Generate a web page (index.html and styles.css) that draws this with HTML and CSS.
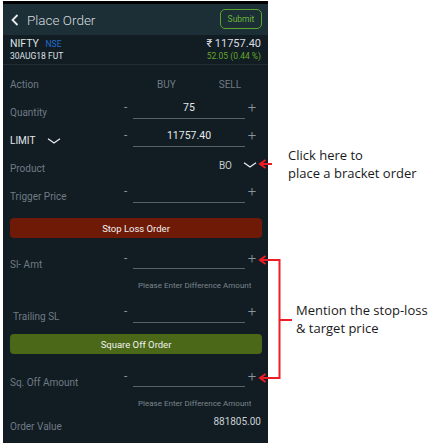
FILE: index.html
```html
<!DOCTYPE html>
<html lang="en">
<head>
    <meta charset="UTF-8">
    <meta name="viewport" content="width=device-width, initial-scale=1.0">
    <title>Place Order</title>
    <link rel="stylesheet" href="styles.css">
</head>
<body>
    <div class="page">
        <div class="phone">
            <header class="topbar">
                <div class="title">
                    <svg class="back" viewBox="0 0 8 12" width="8" height="12">
                        <polyline points="6.5,1 1.5,6 6.5,11" fill="none" stroke="#e8ecee" stroke-width="1.8"/>
                    </svg>
                    <span>Place Order</span>
                </div>
                <button class="submit">Submit</button>
            </header>

            <div class="scrip">
                <div class="scrip-line">
                    <span class="name">NIFTY <em>NSE</em></span>
                    <span class="ltp">₹ 11757.40</span>
                </div>
                <div class="scrip-line small">
                    <span>30AUG18 FUT</span>
                    <span class="change">52.05 (0.44 %)</span>
                </div>
            </div>

            <div class="row action">
                <span class="label">Action</span>
                <div class="sides">
                    <span>BUY</span>
                    <span>SELL</span>
                </div>
            </div>

            <div class="row">
                <span class="label">Quantity</span>
                <div class="stepper">
                    <span class="minus">-</span>
                    <span class="input">75</span>
                    <span class="plus">+</span>
                </div>
            </div>

            <div class="row">
                <span class="label white">LIMIT
                    <svg class="chev" viewBox="0 0 14 6" width="14" height="6">
                        <polyline points="1,0.8 7,5 13,0.8" fill="none" stroke="#e8ecee" stroke-width="1.3"/>
                    </svg>
                </span>
                <div class="stepper">
                    <span class="minus">-</span>
                    <span class="input">11757.40</span>
                    <span class="plus">+</span>
                </div>
            </div>

            <div class="row">
                <span class="label">Product</span>
                <div class="product">
                    <span>BO</span>
                    <svg class="chev" viewBox="0 0 14 6" width="14" height="6">
                        <polyline points="1,0.8 7,5 13,0.8" fill="none" stroke="#e8ecee" stroke-width="1.3"/>
                    </svg>
                </div>
            </div>

            <div class="row">
                <span class="label">Trigger Price</span>
                <div class="stepper">
                    <span class="minus">-</span>
                    <span class="input"></span>
                    <span class="plus">+</span>
                </div>
            </div>

            <button class="band stoploss">Stop Loss Order</button>

            <div class="row sl-amt">
                <span class="label">Sl- Amt</span>
                <div class="stepper">
                    <span class="minus">-</span>
                    <span class="input"></span>
                    <span class="plus">+</span>
                </div>
            </div>
            <p class="hint">Please Enter Difference Amount</p>

            <div class="row trailing">
                <span class="label indent">Trailing SL</span>
                <div class="stepper">
                    <span class="minus">-</span>
                    <span class="input"></span>
                    <span class="plus">+</span>
                </div>
            </div>

            <button class="band squareoff">Square Off Order</button>

            <div class="row sq-amt">
                <span class="label">Sq. Off Amount</span>
                <div class="stepper">
                    <span class="minus">-</span>
                    <span class="input"></span>
                    <span class="plus">+</span>
                </div>
            </div>
            <p class="hint">Please Enter Difference Amount</p>

            <div class="row total">
                <span class="label">Order Value</span>
                <span class="amount">881805.00</span>
            </div>
        </div>

        <div class="notes">
            <p class="note bracket">Click here to<br>place a bracket order</p>
            <p class="note targets">Mention the stop-loss<br>&amp; target price</p>
        </div>

        <!-- red callout arrows drawn over the screenshot edge -->
        <svg class="callouts" viewBox="0 0 428 447" width="428" height="447">
            <g fill="none" stroke="#ee1c24" stroke-width="2">
                <line x1="260" y1="164" x2="272" y2="164"/>
                <polyline points="265.5,160 260,164 265.5,168"/>
                <polyline points="260,260 279.5,260 279.5,378 260,378"/>
                <polyline points="265.5,256 260,260 265.5,264"/>
                <polyline points="265.5,374 260,378 265.5,382"/>
                <line x1="279.5" y1="320" x2="292" y2="320"/>
            </g>
        </svg>
    </div>
</body>
</html>
```

FILE: styles.css
```css
:root {
    --header-bg: #1c2e36;
    --body-bg: #121c23;
    --line: #222e36;
    --label: #6f7b83;
    --value: #e4e8ea;
    --muted: #8a949a;
    --underline: #56626a;
}

* {
    margin: 0;
    padding: 0;
    box-sizing: border-box;
}

body {
    background: #ffffff;
    font-family: Roboto, 'Liberation Sans', Arial, sans-serif;
}

.page {
    position: relative;
    display: flex;
    width: 428px;
    height: 447px;
    padding: 1px 0 0 3px;
}

.phone {
    width: 265px;
    height: 442px;
    background-color: var(--body-bg);
    border-top: 3px solid #000000;
    color: var(--label);
    font-size: 10px;
}

.topbar {
    height: 31px;
    display: flex;
    align-items: center;
    justify-content: space-between;
    padding: 0 6px 0 8px;
    background-color: var(--header-bg);
}

.title {
    display: flex;
    align-items: center;
    gap: 8px;
    color: #d6dcdf;
    font-size: 13.5px;
    font-weight: 300;
}

.submit {
    width: 42px;
    height: 20px;
    border: 1px solid #5aa52a;
    border-radius: 5px;
    background: transparent;
    color: #6bb536;
    font-family: inherit;
    font-size: 8.5px;
    margin-top: -1px;
}

.scrip {
    height: 30px;
    padding: 3px 7px 0 7px;
    border-bottom: 1px solid var(--line);
}

.scrip-line {
    display: flex;
    justify-content: space-between;
    align-items: baseline;
    color: #dfe3e5;
    font-size: 10.5px;
    line-height: 12px;
}

.scrip-line.small {
    font-size: 8.5px;
    line-height: 12px;
}

.name em {
    font-style: normal;
    color: #1f6fd1;
    font-size: 8.5px;
    margin-left: 4px;
}

.ltp {
    font-size: 11px;
    color: #d8dde0;
}

.change {
    color: #62a82c;
}

.row {
    height: 28px;
    display: grid;
    grid-template-columns: 115px 1fr;
    padding-right: 9px;
}

.row .label {
    padding-left: 7px;
    align-self: center;
    margin-top: 1px;
    display: flex;
    align-items: center;
    gap: 12px;
}

.label.white {
    color: var(--value);
}

.label.indent {
    padding-left: 10px;
}

.row.action {
    height: 28px;
    margin-top: 5px;
}

.sides {
    display: flex;
    align-items: center;
    padding-left: 39px;
    gap: 43px;
    margin-top: 1px;
}

.stepper {
    display: flex;
    height: 21px;
    color: var(--muted);
}

.minus {
    width: 15px;
    padding-left: 6px;
    font-size: 12px;
    line-height: 19px;
}

.input {
    width: 112px;
    border-bottom: 1px solid var(--underline);
    text-align: center;
    color: var(--value);
    font-size: 10.5px;
    line-height: 19px;
}

.plus {
    width: 14px;
    text-align: center;
    font-size: 15px;
    line-height: 19px;
    font-weight: 300;
}

.product {
    display: flex;
    align-items: center;
    justify-content: flex-end;
    gap: 11px;
    padding-right: 2px;
    margin-top: -6px;
    color: #c4cacd;
    font-size: 10px;
}

.band {
    display: block;
    width: 252px;
    height: 20px;
    margin: 8px 0 0 7px;
    border: none;
    border-radius: 4px;
    color: #f2f2f2;
    font-family: inherit;
    font-size: 9.5px;
    font-weight: 400;
}

.stoploss {
    background-color: #6f1a07;
}

.squareoff {
    background-color: #4a6817;
    margin-top: 4px;
}

.row.sl-amt {
    margin-top: 12px;
}

.row.sq-amt {
    margin-top: 14px;
}

.row.sl-amt .stepper,
.row.sq-amt .stepper {
    height: 20px;
    margin-top: -1px;
}

.hint {
    height: 14px;
    padding-left: 135px;
    font-size: 8px;
    line-height: 14px;
    color: #7b868c;
    margin-top: 1px;
}

.row.trailing {
    margin-top: 9px;
}

.row.total {
    margin-top: 1px;
}

.amount {
    justify-self: end;
    margin-top: 4px;
    color: #c9cfd2;
    font-size: 10px;
    margin-right: -2px;
}

.notes {
    position: relative;
    flex: 1;
}

.note {
    position: absolute;
    color: #1a1a1a;
    font-family: 'Open Sans', 'Noto Sans', sans-serif;
    font-size: 13px;
    line-height: 18px;
}

.bracket {
    top: 145px;
    left: 20px;
}

.targets {
    top: 300px;
    left: 28px;
}

.callouts {
    position: absolute;
    top: 0;
    left: 0;
    pointer-events: none;
}
```
